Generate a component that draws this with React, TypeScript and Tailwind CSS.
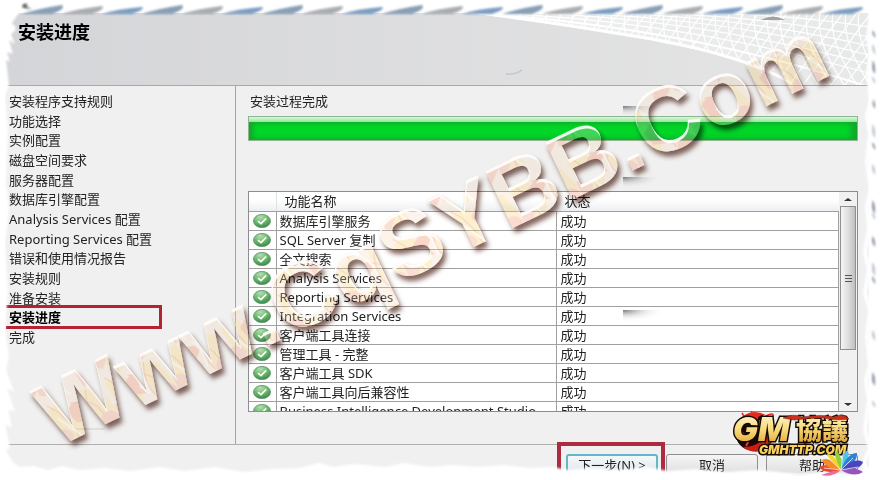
import React from "react";

const steps = [
  "安装程序支持规则",
  "功能选择",
  "实例配置",
  "磁盘空间要求",
  "服务器配置",
  "数据库引擎配置",
  "Analysis Services 配置",
  "Reporting Services 配置",
  "错误和使用情况报告",
  "安装规则",
  "准备安装",
  "安装进度",
  "完成",
];

const features = [
  "数据库引擎服务",
  "SQL Server 复制",
  "全文搜索",
  "Analysis Services",
  "Reporting Services",
  "Integration Services",
  "客户端工具连接",
  "管理工具 - 完整",
  "客户端工具 SDK",
  "客户端工具向后兼容性",
  "Business Intelligence Development Studio",
];

const currentStep = "安装进度";

function SuccessIcon() {
  return (
    <svg viewBox="0 0 18 14" className="mx-auto block h-[14px] w-[18px]" aria-hidden="true">
      <defs>
        <radialGradient id="ball" cx="0.4" cy="0.2" r="0.9">
          <stop offset="0" stopColor="#b4dfb0" />
          <stop offset="0.5" stopColor="#68b86a" />
          <stop offset="1" stopColor="#307e42" />
        </radialGradient>
      </defs>
      <ellipse cx="9" cy="7" rx="8.5" ry="6.6" fill="url(#ball)" stroke="#5b8b64" strokeWidth="0.8" />
      <path d="M5 7.2 L8 9.6 L13.2 4.4" fill="none" stroke="#fff" strokeWidth="1.6" />
    </svg>
  );
}

function HeaderMesh() {
  const columns = Array.from({ length: 40 }, (_, i) => i);
  return (
    <svg
      viewBox="0 0 400 72"
      preserveAspectRatio="xMaxYMin slice"
      className="absolute top-0 right-0 h-[72px] w-[400px]"
      aria-hidden="true"
    >
      <defs>
        <clipPath id="mesh-clip">
          <path d="M0 0 H400 V72 H322 C290 52 240 38 180 27 C120 17 60 8 0 0Z" />
        </clipPath>
        <linearGradient id="mesh-fade">
          <stop offset="0" stopColor="#f0f0f0" />
          <stop offset="1" stopColor="#e7e8e8" />
        </linearGradient>
      </defs>
      <g clipPath="url(#mesh-clip)">
        <rect width="400" height="72" fill="url(#mesh-fade)" />
        <g fill="none" stroke="#fff" strokeWidth="1.2">
          {columns.map((i) => (
            <g key={i}>
              <path d={`M${i * 13} 0 Q${i * 13 - 5} 28 ${i * 13 + 24} 72`} />
              <path d={`M${i * 14 + 10} 0 Q${i * 14 - 8} 24 ${i * 14 - 44} 72`} />
            </g>
          ))}
          <path d="M20 0 Q210 7 400 60" />
          <path d="M60 0 Q230 6 400 51" />
          <path d="M90 0 Q250 4 400 42" />
          <path d="M130 0 Q270 3 400 33" />
          <path d="M170 0 Q290 2 400 24" />
          <path d="M230 0 Q330 2 400 14" />
          <path d="M0 0 Q210 12 400 74" strokeWidth="2" />
          <path d="M0 0 C60 8 120 17 180 27 C240 38 290 52 322 72" strokeWidth="6" />
        </g>
      </g>
      <path d="M292 7 Q304 0 316 7Z" fill="#8d9090" opacity="0.8" />
    </svg>
  );
}

function Smudges() {
  return (
    <svg
      viewBox="0 0 880 480"
      preserveAspectRatio="none"
      className="pointer-events-none absolute inset-0 h-full w-full"
      aria-hidden="true"
    >
      <defs>
        <radialGradient id="smudge" cx="0" cy="0" r="1">
          <stop offset="0" stopColor="#777" />
          <stop offset="0.5" stopColor="#bbb" stopOpacity="0.4" />
          <stop offset="1" stopColor="#fff" stopOpacity="0" />
        </radialGradient>
      </defs>
      <rect x="623" y="106" width="46" height="11" fill="url(#smudge)" />
      <rect x="623" y="177" width="42" height="12" fill="url(#smudge)" />
      <rect x="623" y="310" width="42" height="12" fill="url(#smudge)" />
      <path d="M506 74 Q515 75 522 70" fill="none" stroke="#c6c6c8" strokeWidth="1.5" />
      <path d="M76 429 H105" stroke="#cfcfcf" />
    </svg>
  );
}

function Watermark() {
  return (
    <svg
      viewBox="0 0 880 480"
      className="pointer-events-none absolute inset-0 h-full w-full"
      aria-hidden="true"
    >
      <defs>
        <pattern id="petals" width="64" height="58" patternUnits="userSpaceOnUse">
          <rect width="64" height="58" fill="#fcf3ea" />
          <path d="M0 6 L16 0 L30 26 L22 58 L6 44Z" fill="#fdefc6" />
          <path d="M38 0 L56 8 L64 34 L48 58 L40 28Z" fill="#fdeec8" />
          <path d="M18 14 Q28 4 37 15 L29 23 L34 32 L22 28Z" fill="#fbcdbf" />
          <path d="M46 34 Q58 26 64 40 L52 50 L44 58 L42 44Z" fill="#fbd3c8" />
          <path d="M0 28 Q11 26 14 38 L5 49 L0 46Z" fill="#fad7cd" />
          <path d="M24 40 Q34 34 40 46 L30 56Z" fill="#fcf3f0" />
          <path d="M2 0 Q20 20 18 58 M44 2 Q34 22 42 40 M24 8 Q48 12 50 32" fill="none" stroke="#f7bfae" strokeWidth="1" />
          <path d="M32 4 Q40 18 36 34 M6 16 Q18 34 28 58" fill="none" stroke="#fff" strokeWidth="2" />
        </pattern>
        <filter id="cast" x="-5%" y="-20%" width="110%" height="150%">
          <feDropShadow dx="3" dy="5" stdDeviation="2.5" floodColor="#5c3326" floodOpacity="0.75" />
        </filter>
        <filter id="bevel" x="-5%" y="-20%" width="110%" height="150%">
          <feOffset in="SourceAlpha" dx="1" dy="3" result="moved" />
          <feFlood floodColor="#fff" />
          <feComposite in2="SourceAlpha" operator="in" result="white" />
          <feComposite in="white" in2="moved" operator="out" />
          <feGaussianBlur stdDeviation="0.6" />
        </filter>
      </defs>
      <g className="mix-blend-multiply" filter="url(#cast)">
        <text
          x="56"
          y="448"
          transform="rotate(-25.7 56 448)"
          fill="url(#petals)"
          className="font-['Liberation_Sans',sans-serif] text-[92px] font-bold [font-kerning:none]"
        >
          Www.CqSYBB.Com
        </text>
      </g>
      {/* pale body keeps the letters brighter than the panel */}
      <text
        x="56"
        y="448"
        transform="rotate(-25.7 56 448)"
        fill="#fff6e8"
        opacity="0.25"
        className="font-['Liberation_Sans',sans-serif] text-[92px] font-bold [font-kerning:none]"
      >
        Www.CqSYBB.Com
      </text>
      <g filter="url(#bevel)" opacity="0.9">
        <text
          x="56"
          y="448"
          transform="rotate(-25.7 56 448)"
          className="font-['Liberation_Sans',sans-serif] text-[92px] font-bold [font-kerning:none]"
        >
          Www.CqSYBB.Com
        </text>
      </g>
    </svg>
  );
}

function TornEdges() {
  const streaks = Array.from({ length: 21 }, (_, i) => i);
  const specks = [30, 44, 60, 76, 98, 124, 142, 164, 200, 212, 236, 262, 276, 330, 372, 400];
  return (
    <svg
      viewBox="0 0 880 480"
      preserveAspectRatio="none"
      className="pointer-events-none absolute inset-0 h-full w-full"
      aria-hidden="true"
    >
      <defs>
        <filter id="soft">
          <feGaussianBlur stdDeviation="1" />
        </filter>
        <linearGradient id="sky">
          <stop offset="0" stopColor="#727272" />
          <stop offset="0.2" stopColor="#5a7da1" />
          <stop offset="0.4" stopColor="#46709a" />
          <stop offset="0.7" stopColor="#76808c" />
          <stop offset="1" stopColor="#546a85" />
        </linearGradient>
      </defs>
      <g filter="url(#soft)">
        {streaks.map((i) => (
          <path
            key={i}
            d={`M${22 + i * 40} 14 Q${36 + i * 40} 9 ${62 + i * 40} ${5 + (i % 3)} Q${66 + i * 40} 9 ${52 + i * 40} 14Z`}
            fill={["#6c87a3", "#93979b", "#5d86b0"][i % 3]}
            opacity="0.8"
          />
        ))}
        <path d="M22 8 Q22 2 28 4 Q24 6 32 9Z" fill="#666" />
        {specks.map((y, i) => (
          <path
            key={y}
            d={`M872 ${y} q4 3 3 ${8 + (i % 3) * 3} q-3 -4 -3 -6Z`}
            fill={i % 2 ? "#a4b0c2" : "#5f7187"}
            opacity="0.7"
          />
        ))}
        {/* left */}
        <path
          d="M-4 8 H24 Q14 18 12 24 Q20 28 11 34 L15 44 L9 40 L13 54 L7 52 L10 62 L6 60 L9 84 L5 96 L8 130 L6 180 L9 210 L5 245 L8 290 L5 330 L9 356 L6 370 L14 392 L7 388 L15 412 L8 409 L12 428 L5 424 L10 448 L6 450 L16 468 L-4 490Z"
          fill="#fff"
        />
        {/* bottom */}
        <path
          d="M-4 465 L8 460 L20 467 L34 466 L48 470 L62 466 L80 470 L106 468 L130 471 L160 467 L184 471 L215 467 L244 472 L272 469 L300 468 L318 463 L334 467 L354 464 L386 467 L404 463 L430 467 L452 465 L478 467 L503 465 L530 468 L552 467 L568 470 L590 468 L620 470 L646 467 L668 471 L696 469 L726 472 L758 470 L800 474 L824 472 L850 474 L866 468 L884 464 V490 H-4Z"
          fill="#fff"
        />
        {/* right */}
        <path
          d="M871 10 L868 38 L871 54 L868 72 L871 100 L867 116 L870 134 L867 162 L871 190 L867 206 L869 228 L865 252 L869 270 L865 293 L870 310 L867 336 L870 365 L866 380 L869 400 L865 430 L870 448 L864 463 L870 480"
          fill="none"
          stroke="#fff"
          strokeWidth="4"
        />
      </g>
      <path d="M22 13.5 H862" stroke="url(#sky)" strokeWidth="1" />
    </svg>
  );
}

function SiteLogo() {
  return (
    <svg
      viewBox="0 0 136 66"
      className="pointer-events-none absolute right-[14px] bottom-1 h-[66px] w-[136px]"
      aria-label="GM協議 GMHTTP.COM"
    >
      <defs>
        <linearGradient id="gold" x1="0" y1="0" x2="0" y2="1">
          <stop offset="0" stopColor="#fffbe0" />
          <stop offset="0.5" stopColor="#f8dd7d" />
          <stop offset="1" stopColor="#d99820" />
        </linearGradient>
      </defs>
      {/* dragon ring */}
      <circle cx="24" cy="22" r="19" fill="#1a0705" />
      <path d="M6 14 Q18 -4 36 5 Q26 5 28 11 Q16 6 11 19Z" fill="#e02a1c" />
      <path d="M41 13 Q49 27 37 38 Q26 46 12 37 Q28 37 32 28 Q39 25 41 13Z" fill="#c91e16" />
      <path d="M15 9 Q25 15 20 22 Q32 20 30 10 M10 22 Q22 28 16 36 M28 29 Q36 31 33 38" fill="none" stroke="#f0402b" strokeWidth="2" />
      <path d="M36 6 Q46 1 42 9 M12 3 L15 8 M22 1 L21 6" fill="none" stroke="#e12a2a" strokeWidth="1.5" />
      <text
        x="3"
        y="31"
        fill="url(#gold)"
        stroke="#160b04"
        strokeWidth="3"
        paintOrder="stroke"
        className="font-['Inter',sans-serif] text-[33px] font-black italic"
      >
        GM
      </text>
      <text
        x="66"
        y="29"
        fill="url(#gold)"
        stroke="#160b04"
        strokeWidth="3"
        paintOrder="stroke"
        className="font-['Noto_Sans_CJK_TC',sans-serif] text-[26px] font-black"
      >
        協議
      </text>
      <path d="M53 8 Q63 3 72 7 Q92 4 105 7 Q113 2 119 9 Q105 11 94 8 Q78 8 64 10Z" fill="#cc301c" stroke="#5b140b" strokeWidth="0.5" />
      <text
        x="29"
        y="44"
        fill="#f7d15c"
        stroke="#160b04"
        strokeWidth="3"
        paintOrder="stroke"
        className="font-['Inter',sans-serif] text-[12px] font-black italic"
      >
        GMHTTP.COM
      </text>
      {/* colour fan */}
      <g transform="translate(111 60)">
        <path d="M0 0 Q-13 -8 -22 -3 Q-16 5 0 0Z" fill="#e94828" />
        <path d="M0 0 Q-10 -14 -19 -10 Q-16 -1 0 0Z" fill="#f58b24" />
        <path d="M0 0 Q-13 -12 -14 -16 Q-5 -16 0 0Z" fill="#f4d52c" />
        <path d="M0 0 Q-9 -17 -4 -19 Q2 -13 0 0Z" fill="#8fcf3c" />
        <path d="M0 0 Q-1 -17 7 -20 Q10 -11 0 0Z" fill="#54c3e8" />
        <path d="M0 0 Q6 -17 16 -17 Q17 -7 0 0Z" fill="#2b83dc" />
        <path d="M0 0 Q13 -13 22 -8 Q19 1 0 0Z" fill="#4a45bd" />
        <path d="M0 0 Q14 -4 22 2 Q13 8 0 0Z" fill="#9854bd" />
        <path d="M0 0 Q-9 1 -20 5 Q-9 8 0 0Z" fill="#e86ba4" />
        <path d="M0 0 L-14 -13 M0 0 L2 -16 M0 0 L12 -12 M0 0 L-17 -2 M0 0 L17 -3" stroke="#fff" strokeWidth="1" opacity="0.7" />
      </g>
    </svg>
  );
}

export default function App() {
  return (
    <div className="relative flex min-h-screen flex-col overflow-hidden bg-white pt-[13px] pr-[11px] pl-[5px] font-['Noto_Sans','Noto_Sans_CJK_SC',sans-serif] text-[13px] leading-[18px] text-[#222]">
      <header className="relative h-[73px] border-b border-[#a9a9ab] bg-linear-to-r from-[#d4d5d8] to-[#e6e6e6] px-[13px] pt-[6px]">
        <HeaderMesh />
        <h1 className="relative text-lg leading-[26px] font-bold text-black">安装进度</h1>
      </header>

      <div className="flex flex-1 bg-[#f0f0f0]">
        {/* Steps */}
        <nav className="w-[231px] shrink-0 border-r border-[#a5a5a5] pt-[5px]">
          <ol className="grid h-64">
            {steps.map((step) => (
              <li
                key={step}
                className={
                  step === currentStep
                    ? "relative flex items-center pl-1 font-bold text-black"
                    : "flex items-center pl-1"
                }
              >
                {step}
                {step === currentStep && (
                  <span className="absolute -top-[3px] left-[1px] h-6 w-[156px] border-y-[3px] border-r-[3px] border-[#b52231]" />
                )}
              </li>
            ))}
          </ol>
        </nav>

        {/* Progress and results */}
        <main className="flex min-w-0 flex-1 flex-col pt-[6px] pr-[11px] pl-3">
          <h2 className="pl-[2px]">安装过程完成</h2>
          <div
            role="progressbar"
            aria-label="安装过程完成"
            aria-valuenow={100}
            className="mt-[6px] flex h-[25px] flex-col border border-[#8fb492]"
          >
            <div className="h-[5px] bg-linear-to-b from-[#d9f7da] to-[#8fe79a]" />
            <div className="flex-1 bg-[#00d628] shadow-[inset_-6px_0_6px_#14a52c,inset_4px_0_5px_#14a52c]" />
          </div>

          <div className="mt-[50px] flex h-[221px] overflow-hidden border border-[#8b8d91] bg-white">
            <div className="min-w-0 flex-1 overflow-hidden">
              <table className="w-full table-fixed border-collapse">
                <thead>
                  <tr className="h-[19px] bg-linear-to-b from-white from-40% to-[#eceff2] text-left">
                    <th className="w-[27px] border-r border-b border-[#a0a0a0] border-r-[#dfe2e5] p-0" />
                    <th className="w-[280px] border-r border-b border-[#a0a0a0] border-r-[#dfe2e5] p-0 pl-2 font-normal">
                      功能名称
                    </th>
                    <th className="border-b border-[#a0a0a0] p-0 pl-2 font-normal">状态</th>
                  </tr>
                </thead>
                <tbody>
                  {features.map((feature) => (
                    <tr key={feature} className="h-[19px]">
                      <td className="border-r border-b border-[#a0a0a0] p-0">
                        <SuccessIcon />
                      </td>
                      <td className="border-r border-b border-[#a0a0a0] p-0 pl-[3px] whitespace-nowrap">
                        {feature}
                      </td>
                      <td className="border-r border-b border-[#a0a0a0] p-0 pl-1">成功</td>
                    </tr>
                  ))}
                </tbody>
              </table>
            </div>

            {/* Scrollbar */}
            <div className="flex w-[18px] shrink-0 flex-col items-center bg-[#f1f1f1]">
              <button type="button" aria-label="向上滚动" className="grid h-[14px] w-full place-items-center">
                <span className="border-x-4 border-b-3 border-x-transparent border-b-[#333]" />
              </button>
              <div className="grid h-[144px] w-4 place-items-center border border-[#8f8f8f] bg-linear-to-r from-[#f5f5f5] via-[#dedede] to-[#bfbfbf]">
                <span className="h-[7px] w-[7px] border-y border-[#555] bg-linear-to-b from-transparent from-40% via-[#555] via-50% to-transparent to-60%" />
              </div>
              <button type="button" aria-label="向下滚动" className="mt-auto grid h-[14px] w-full place-items-center">
                <span className="border-x-4 border-t-3 border-x-transparent border-t-[#333]" />
              </button>
            </div>
          </div>
        </main>
      </div>

      <footer className="flex justify-end gap-2 border-t border-[#b0b0b0] bg-[#f0f0f0] pt-[9px] pr-[11px] pb-1">
        <div className="relative">
          <button
            type="button"
            className="h-[22px] w-[92px] rounded-[3px] border-2 border-[#62b8c8] bg-linear-to-b from-[#f4f8fa] to-[#dfe6e9]"
          >
            下一步(N) &gt;
          </button>
          <span className="pointer-events-none absolute -top-3 -right-[7px] -left-[9px] h-[50px] border-4 border-[#ad2b40]" />
        </div>
        <button
          type="button"
          className="h-[22px] w-[92px] rounded-[3px] border border-[#8f8f8f] bg-linear-to-b from-[#f5f5f5] to-[#dedede]"
        >
          取消
        </button>
        <button
          type="button"
          className="h-[22px] w-[92px] rounded-[3px] border border-[#8f8f8f] bg-linear-to-b from-[#f5f5f5] to-[#dedede]"
        >
          帮助
        </button>
      </footer>

      <Smudges />
      <Watermark />
      <TornEdges />
      <SiteLogo />
    </div>
  );
}
